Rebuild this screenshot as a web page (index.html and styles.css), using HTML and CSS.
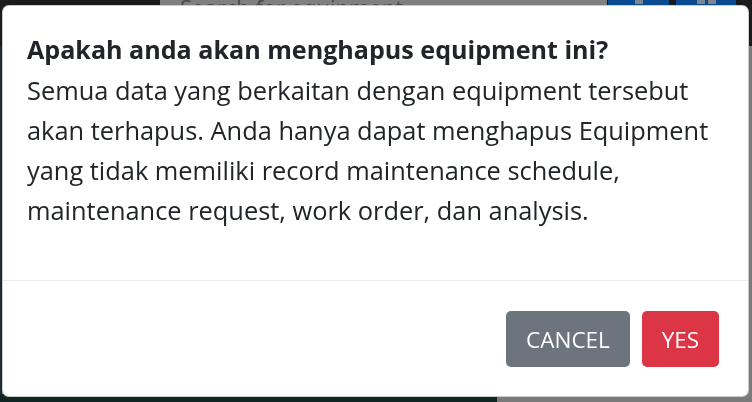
FILE: index.html
```html
<!DOCTYPE html>
<html lang="id">
<head>
<meta charset="utf-8">
<title>Hapus Equipment</title>
<link rel="stylesheet" href="styles.css">
</head>
<body>
<div class="page">
  <div class="topbar">
    <div class="search">Search for equipment</div>
    <div class="tb-btn"><span class="ico"></span></div>
    <div class="tb-btn"><span class="ico"></span><span class="ico"></span></div>
  </div>
  <div class="content"></div>
  <div class="bottom"><div class="img"></div><div class="table"></div></div>
</div>

<div class="modal" role="dialog">
  <div class="modal-body">
    <div class="title">Apakah anda akan menghapus equipment ini?</div>
    <p class="text">Semua data yang berkaitan dengan equipment tersebut<br>akan terhapus. Anda hanya dapat menghapus Equipment<br>yang tidak memiliki record maintenance schedule,<br>maintenance request, work order, dan analysis.</p>
  </div>
  <div class="modal-footer">
    <button class="btn btn-secondary">CANCEL</button>
    <button class="btn btn-danger">YES</button>
  </div>
</div>
</body>
</html>
```

FILE: styles.css
```css
html, body {
  margin: 0;
  padding: 0;
  height: 100%;
  overflow: hidden;
}
body {
  background: #1b1b1b;
  font-family: "Open Sans", "Noto Sans", sans-serif;
}
.page {
  display: flex;
  flex-direction: column;
  height: 402px;
}
.topbar {
  display: flex;
  height: 46px;
  padding-left: 160px;
  background: #1b1b1b;
}
.search {
  width: 427px;
  padding-left: 20px;
  background: #808080;
  color: #4a4a4a;
  font-size: 22px;
  line-height: 22px;
  margin-top: -4px;
  height: 50px;
}
.tb-btn {
  width: 61px;
  margin-left: 1px;
  background: #0a4a90;
  display: flex;
  justify-content: center;
  gap: 3px;
}
.tb-btn + .tb-btn {
  margin-left: 7px;
  width: 60px;
}
.ico {
  width: 8px;
  height: 4px;
  background: #7d8590;
}
.content {
  flex: 1;
  background: #7b7b7b;
  border-left: 2px solid #1d2a3a;
}
.bottom {
  display: flex;
  height: 8px;
}
.bottom .img {
  width: 497px;
  background: #0d2624;
}
.bottom .table {
  flex: 1;
  background: #7a7a7a;
}

.modal {
  position: fixed;
  left: 2px;
  top: 5px;
  width: 747px;
  height: 392px;
  box-sizing: border-box;
  background: #fff;
  border: 1px solid rgba(0,0,0,0.2);
  border-radius: 7px;
  display: flex;
  flex-direction: column;
  color: #212529;
}
.modal-body {
  padding: 23px 20px 0 24px;
  height: 251px;
  border-bottom: 1px solid #e9ecef;
}
.title {
  font-weight: 700;
  font-size: 25.1px;
  line-height: 40px;
  margin-bottom: 1px;
}
.text {
  margin: 0;
  font-size: 25.4px;
  line-height: 40px;
  white-space: nowrap;
}
.modal-footer {
  display: flex;
  justify-content: flex-end;
  gap: 12px;
  padding: 30px 29px 0 0;
}
.btn {
  height: 56px;
  border: 0;
  border-radius: 5px;
  color: #fff;
  font-family: "Open Sans", "Noto Sans", sans-serif;
  font-size: 22.5px;
  padding: 0;
}
.btn-secondary { background: #6c757d; width: 124px; }
.btn-danger { background: #dc3545; width: 77px; }
```
